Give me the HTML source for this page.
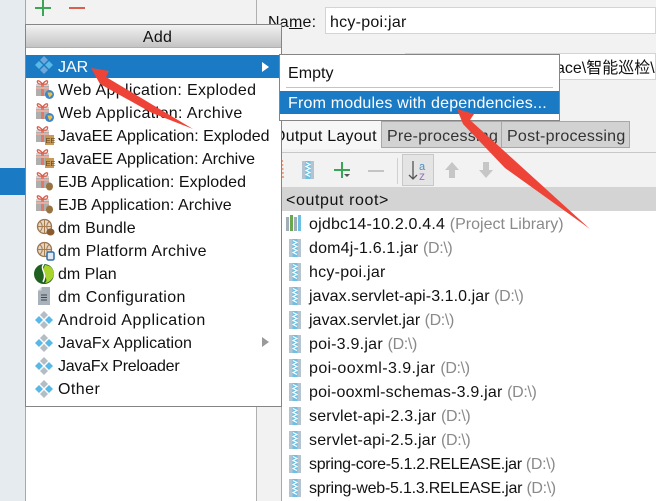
<!DOCTYPE html>
<html><head><meta charset="utf-8">
<style>
html,body{margin:0;padding:0}
body{width:656px;height:501px;overflow:hidden;position:relative;background:#f2f2f2;font-family:"Liberation Sans","Noto Sans CJK SC",sans-serif;font-size:16px;color:#111}
.a{position:absolute}
.t{position:absolute;white-space:nowrap;line-height:20px;letter-spacing:.25px}
.g{color:#8a8a8a;letter-spacing:-.35px}
svg{position:absolute;overflow:visible}
</style></head><body>
<svg width="0" height="0" style="position:absolute"><defs>
<g id="d"><path d="M9 0l4 4-4 4-4-4z" fill="#b4bcc4"/><path d="M9 10l4 4-4 4-4-4z" fill="#b4bcc4"/><path d="M4 5l4 4-4 4-4-4z" fill="#58b8e6"/><path d="M14 5l4 4-4 4-4-4z" fill="#58b8e6"/></g>
<g id="dj"><path d="M9 0l4 4-4 4-4-4z" fill="#6fa8d8"/><path d="M9 10l4 4-4 4-4-4z" fill="#6fa8d8"/><path d="M4 5l4 4-4 4-4-4z" fill="#58b8e6"/><path d="M14 5l4 4-4 4-4-4z" fill="#58b8e6"/></g>
<g id="gift"><rect x="0" y="4" width="13" height="12" fill="#aeaeae"/><rect x="0" y="4" width="13" height="2" fill="#d4d4d4"/><rect x="5" y="4" width="3" height="12" fill="#e07a68"/><rect x="0" y="7" width="13" height="2" fill="#e4b0a4"/><path d="M6.500 4C3 0 .5 0 1.500 2.500S5 4 6.500 4c2 0 4.500 1 5-1.500S10 0 6.500 4z" fill="none" stroke="#d9604f" stroke-width="1.300"/></g>
<g id="web"><use href="#gift"/><circle cx="13.500" cy="14.500" r="4.500" fill="#3f86c8"/><path d="M11.500 12.500h4l1 2-3 3-1-2z" fill="#f0c040"/></g>
<g id="ee"><use href="#gift"/><rect x="9" y="9" width="9" height="10" fill="#c89a58"/><text x="9.500" y="17" font-size="7.500" fill="#6a4a20" font-family="Liberation Sans">EE</text></g>
<g id="ejb"><use href="#gift"/><ellipse cx="13.500" cy="14.500" rx="3.500" ry="4" fill="#9a7440"/></g>
<g id="globe"><circle cx="8.500" cy="8.500" r="7" fill="#e6d5c0" stroke="#9a7450" stroke-width="1.300"/><path d="M8.500 1v15M1.500 8.500h14M4 3.500q4.500 5 0 10M13 3.500q-4.500 5 0 10" fill="none" stroke="#a67c52"/></g>
<g id="jar"><rect x="0" y="0" width="12" height="18" fill="#b3c3cf"/><rect x="3.500" y="0" width="5" height="18" fill="#6cc0e4"/><path d="M4 1.500l4 2-4 2 4 2-4 2 4 2-4 2 4 2" fill="none" stroke="#fff" stroke-width="1.100"/></g>
</defs></svg>

<!-- left strip -->
<div class="a" style="left:0;top:0;width:25px;height:501px;background:#e6ebf0"></div>
<div class="a" style="left:0;top:168px;width:25px;height:27px;background:#1a7bc4"></div>
<div class="a" style="left:25px;top:0;width:1px;height:501px;background:#a8a8a8"></div>
<!-- middle -->
<div class="a" style="left:26px;top:0;width:230px;height:24px;background:#f2f2f2"></div>
<div class="a" style="left:26px;top:406px;width:230px;height:95px;background:#fff"></div>
<div class="a" style="left:256px;top:0;width:1px;height:501px;background:#b0b0b0"></div>
<div class="a" style="left:35px;top:7px;width:16px;height:2px;background:#3aa655"></div>
<div class="a" style="left:42px;top:0;width:2px;height:16px;background:#3aa655"></div>
<div class="a" style="left:69px;top:7px;width:16px;height:2px;background:#d8604c"></div>

<!-- right top -->
<div class="t" style="left:268px;top:13px">Na<span style="text-decoration:underline">m</span>e:</div>
<div class="a" style="left:325px;top:7px;width:331px;height:27px;background:#fff;border:1px solid #d4d4d4;box-sizing:border-box"></div>
<div class="t" style="left:330px;top:13px">hcy-poi:jar</div>
<div class="a" style="left:405px;top:53px;width:251px;height:27px;background:#fff;border:1px solid #d4d4d4;box-sizing:border-box"></div>
<div class="t" style="left:556px;top:59px;letter-spacing:0">ace\智能巡检\|</div>

<!-- tabs -->
<div class="a" style="left:257px;top:121px;width:125px;height:28px;background:#f7f7f7"></div>
<div class="t" style="left:273px;top:127px">Output Layout</div>
<div class="a" style="left:381px;top:121px;width:121px;height:27px;background:#d2d2d2;border:1px solid #a8a8a8;box-sizing:border-box"></div>
<div class="t" style="left:387px;top:127px;color:#333">Pre-processing</div>
<div class="a" style="left:501px;top:121px;width:129px;height:27px;background:#d2d2d2;border:1px solid #a8a8a8;box-sizing:border-box"></div>
<div class="t" style="left:507px;top:127px;color:#333">Post-processing</div>

<!-- content -->
<div class="a" style="left:281px;top:152px;width:375px;height:349px;background:#fff"></div>
<div class="a" style="left:281px;top:152px;width:375px;height:1px;background:#c8c8c8"></div>
<div class="a" style="left:281px;top:152px;width:1px;height:349px;background:#a8a8a8"></div>
<div class="a" style="left:282px;top:153px;width:374px;height:34px;background:#f2f2f2"></div>
<div class="a" style="left:282px;top:187px;width:374px;height:24px;background:#d4d4d4"></div>
<div class="t" style="left:286px;top:191px;letter-spacing:.6px">&lt;output root&gt;</div>

<!-- toolbar -->
<svg style="left:302px;top:161px" width="13" height="18"><use href="#jar"/></svg>
<div class="a" style="left:334px;top:169px;width:16px;height:2px;background:#3aa655"></div>
<div class="a" style="left:341px;top:162px;width:2px;height:16px;background:#3aa655"></div>
<svg style="left:0;top:0" width="656" height="501">
<path d="M344 174h6l-3 3z" fill="#555"/>
<rect x="368" y="170" width="16" height="2" fill="#c4c4c4"/>
<rect x="397" y="158" width="1" height="26" fill="#d0d0d0"/>
<rect x="402.500" y="154.500" width="31" height="31" fill="#e4e4e4" stroke="#c8c8c8"/>
<path d="M413 161v18M409 175l4 4 4-4" fill="none" stroke="#555" stroke-width="1.300"/>
<text x="419" y="170" font-size="11" fill="#4a90c8" font-family="Liberation Sans">a</text>
<text x="419" y="180" font-size="12" fill="#9a70b8" font-family="Liberation Sans">z</text>
<path d="M452 162l7 8h-4v8h-6v-8h-4z" fill="#c6c6c6"/>
<path d="M486 178l7-8h-4v-8h-6v8h-4z" fill="#c6c6c6"/>
<path d="M282 160l1 18" stroke="#e8a080" stroke-width="2" stroke-dasharray="2 2"/>
</svg>

<!-- library list -->
<svg style="left:286px;top:215px" width="18" height="16"><rect x="0" y="2" width="3" height="14" fill="#a0aeb8"/><rect x="4" y="0" width="3" height="16" fill="#6aa84f"/><rect x="8" y="2" width="3" height="14" fill="#a0aeb8"/><rect x="12" y="0" width="3" height="16" fill="#6cc0e4"/></svg>
<div class="t" style="left:309px;top:215px;letter-spacing:.2px">ojdbc14-10.2.0.4.4 <span class="g" style="letter-spacing:0">(Project Library)</span></div>

<svg style="left:289px;top:239px" width="13" height="18"><use href="#jar"/></svg>
<div class="t" style="left:309px;top:239px;letter-spacing:.18px">dom4j-1.6.1.jar <span class="g">(D:\)</span></div>
<svg style="left:289px;top:263px" width="13" height="18"><use href="#jar"/></svg>
<div class="t" style="left:309px;top:263px">hcy-poi.jar</div>
<svg style="left:289px;top:287px" width="13" height="18"><use href="#jar"/></svg>
<div class="t" style="left:309px;top:287px;letter-spacing:.07px">javax.servlet-api-3.1.0.jar <span class="g">(D:\)</span></div>
<svg style="left:289px;top:311px" width="13" height="18"><use href="#jar"/></svg>
<div class="t" style="left:309px;top:311px;letter-spacing:0">javax.servlet.jar <span class="g">(D:\)</span></div>
<svg style="left:289px;top:335px" width="13" height="18"><use href="#jar"/></svg>
<div class="t" style="left:309px;top:335px">poi-3.9.jar <span class="g">(D:\)</span></div>
<svg style="left:289px;top:359px" width="13" height="18"><use href="#jar"/></svg>
<div class="t" style="left:309px;top:359px;letter-spacing:.43px">poi-ooxml-3.9.jar <span class="g">(D:\)</span></div>
<svg style="left:289px;top:383px" width="13" height="18"><use href="#jar"/></svg>
<div class="t" style="left:309px;top:383px;letter-spacing:.2px">poi-ooxml-schemas-3.9.jar <span class="g">(D:\)</span></div>
<svg style="left:289px;top:407px" width="13" height="18"><use href="#jar"/></svg>
<div class="t" style="left:309px;top:407px;letter-spacing:.2px">servlet-api-2.3.jar <span class="g">(D:\)</span></div>
<svg style="left:289px;top:431px" width="13" height="18"><use href="#jar"/></svg>
<div class="t" style="left:309px;top:431px;letter-spacing:.2px">servlet-api-2.5.jar <span class="g">(D:\)</span></div>
<svg style="left:289px;top:455px" width="13" height="18"><use href="#jar"/></svg>
<div class="t" style="left:309px;top:455px;letter-spacing:-.3px">spring-core-5.1.2.RELEASE.jar <span class="g">(D:\)</span></div>
<svg style="left:289px;top:479px" width="13" height="18"><use href="#jar"/></svg>
<div class="t" style="left:309px;top:479px;letter-spacing:-.23px">spring-web-5.1.3.RELEASE.jar <span class="g">(D:\)</span></div>

<!-- main popup -->
<div class="a" style="left:25px;top:24px;width:257px;height:383px;background:#fff;border:1px solid #858585;box-sizing:border-box"></div>
<div class="a" style="left:26px;top:25px;width:255px;height:23px;background:linear-gradient(#f2f2f2,#c4c4c4);border-bottom:1px solid #b0b0b0;box-sizing:border-box"></div>
<div class="t" style="left:30px;width:255px;top:28px;text-align:center">Add</div>
<div class="a" style="left:26px;top:55px;width:255px;height:23px;background:#1a7bc4"></div>

<svg style="left:35px;top:56px" width="18" height="18"><use href="#dj"/></svg>
<div class="t" style="left:58px;top:58px;color:#fff;letter-spacing:0">JAR</div>
<svg style="left:0;top:0" width="656" height="501"><path d="M262 62l7 5-7 5z" fill="#fff"/><path d="M262 337l7 5-7 5z" fill="#9a9a9a"/></svg>

<svg style="left:36px;top:80px" width="20" height="20"><use href="#web"/></svg>
<div class="t" style="left:58px;top:81px;letter-spacing:.33px">Web Application: Exploded</div>
<svg style="left:36px;top:103px" width="20" height="20"><use href="#web"/></svg>
<div class="t" style="left:58px;top:104px;letter-spacing:.37px">Web Application: Archive</div>
<svg style="left:36px;top:126px" width="20" height="20"><use href="#ee"/></svg>
<div class="t" style="left:58px;top:127px;letter-spacing:-.04px">JavaEE Application: Exploded</div>
<svg style="left:36px;top:149px" width="20" height="20"><use href="#ee"/></svg>
<div class="t" style="left:58px;top:150px;letter-spacing:-.05px">JavaEE Application: Archive</div>
<svg style="left:36px;top:172px" width="20" height="20"><use href="#ejb"/></svg>
<div class="t" style="left:58px;top:173px;letter-spacing:.05px">EJB Application: Exploded</div>
<svg style="left:36px;top:195px" width="20" height="20"><use href="#ejb"/></svg>
<div class="t" style="left:58px;top:196px;letter-spacing:.05px">EJB Application: Archive</div>
<svg style="left:36px;top:218px" width="20" height="20"><use href="#globe"/><ellipse cx="14.500" cy="14" rx="4" ry="3.500" fill="#8a5a30"/></svg>
<div class="t" style="left:58px;top:219px;letter-spacing:.14px">dm Bundle</div>
<svg style="left:36px;top:241px" width="20" height="20"><use href="#globe"/><rect x="11" y="11" width="7" height="8" rx="1.500" fill="#dfe9f3" stroke="#2f6ea8" stroke-width="1.500"/></svg>
<div class="t" style="left:58px;top:242px;letter-spacing:.3px">dm Platform Archive</div>
<svg style="left:34px;top:264px" width="20" height="20"><circle cx="10" cy="10" r="10" fill="#1f5f1f"/><path d="M10 1C17 1 20 6 20 10c0 4-5 9-9 9 5-4-5-8 0-18z" fill="#a8d42c"/><path d="M10 0c-5 5 4 9-1 18" fill="none" stroke="#fff" stroke-width="1.500"/></svg>
<div class="t" style="left:58px;top:265px;letter-spacing:0">dm Plan</div>
<svg style="left:38px;top:287px" width="13" height="18"><path d="M4 0h8v18H0V4z" fill="#a8b2ba"/><path d="M0 3.500L3.500 0v3.500z" fill="#d8dde0"/><path d="M3 8h6M3 10.500h6M3 13h6" stroke="#444" stroke-width="1"/></svg>
<div class="t" style="left:58px;top:288px;letter-spacing:.37px">dm Configuration</div>
<svg style="left:35px;top:311px" width="18" height="18"><use href="#d"/></svg>
<div class="t" style="left:58px;top:311px;letter-spacing:.57px">Android Application</div>
<svg style="left:35px;top:334px" width="18" height="18"><use href="#d"/></svg>
<div class="t" style="left:58px;top:334px;letter-spacing:.03px">JavaFx Application</div>
<svg style="left:35px;top:357px" width="18" height="18"><use href="#d"/></svg>
<div class="t" style="left:58px;top:357px;letter-spacing:-.25px">JavaFx Preloader</div>
<svg style="left:35px;top:380px" width="18" height="18"><use href="#d"/></svg>
<div class="t" style="left:58px;top:380px;letter-spacing:.45px">Other</div>

<!-- submenu -->
<div class="a" style="left:279px;top:54px;width:281px;height:67px;background:#fff;border:1px solid #858585;box-sizing:border-box"></div>
<div class="a" style="left:286px;top:87px;width:267px;height:1px;background:#c4c4c4"></div>
<div class="a" style="left:280px;top:91px;width:279px;height:23px;background:#1a7bc4"></div>
<div class="t" style="left:288px;top:64px;letter-spacing:.05px">Empty</div>
<div class="t" style="left:288px;top:94px;color:#fff;letter-spacing:.19px">From modules with dependencies...</div>

<!-- arrows -->
<svg style="left:0;top:0" width="656" height="501">
<path d="M91 68L109 71 106 77 193 129 152 113 100 84z" fill="#ee4438"/>
<path d="M457 109L474 114 470 120 590 229 505 168 463 124z" fill="#ee4438"/>
</svg>
</body></html>
